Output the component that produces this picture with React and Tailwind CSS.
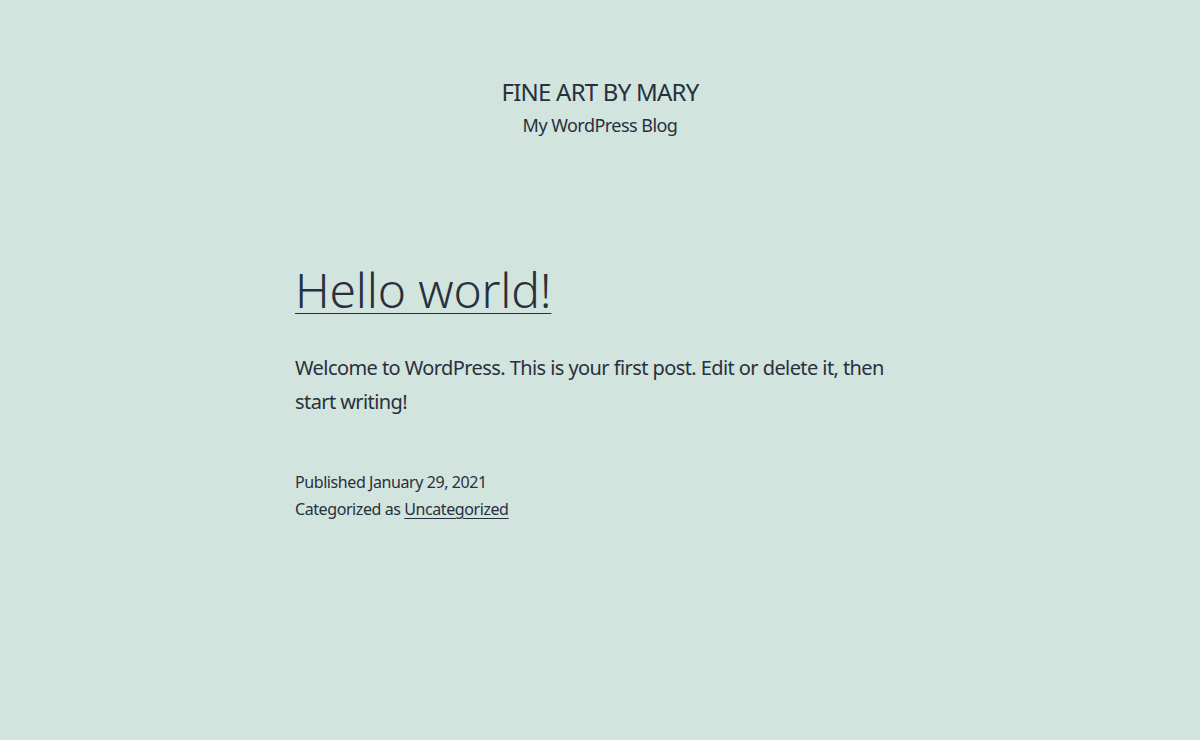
import React from 'react';

const font = { fontFamily: '"Noto Sans", "Liberation Sans", sans-serif' };

const App = () => {
    return (
        <div className="min-h-[740px] bg-[#d1e4dd] text-[#28303d] tracking-[-0.026em]" style={font}>
            {/* Site header */}
            <header className="flex flex-col items-center pt-[76px] text-center">
                <p className="text-[24px] leading-[1.3] uppercase tracking-[-0.032em]">Fine Art by Mary</p>
                <p className="text-[18px] leading-[1.4] mt-[6px] tracking-[-0.03em]">My WordPress Blog</p>
            </header>

            {/* Post */}
            <main className="w-[610px] mx-auto pt-[121px]">
                <h2 className="text-[48px] leading-[1.3] font-light tracking-[-0.004em]">
                    <a href="#" className="underline decoration-1 underline-offset-[5px]">Hello world!</a>
                </h2>
                <div className="mt-[29px] text-[20px] leading-[1.7] tracking-[-0.029em]">
                    <p>Welcome to WordPress. This is your first post. Edit or delete it, then start writing!</p>
                </div>
                <footer className="mt-[50px] text-[16px] leading-[1.7]">
                    <p>Published January 29, 2021</p>
                    <p>
                        Categorized as{' '}
                        <a href="#" className="underline decoration-1 underline-offset-[3px]">Uncategorized</a>
                    </p>
                </footer>
            </main>
        </div>
    );
};

export default App;
